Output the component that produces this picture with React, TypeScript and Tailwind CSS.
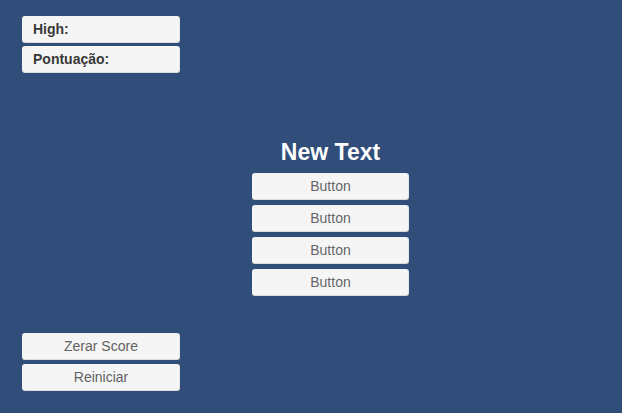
const labels = ['High:', 'Pontuação:']
const menu = ['Button', 'Button', 'Button', 'Button']
const actions = ['Zerar Score', 'Reiniciar']

const box =
  'h-[27px] rounded-[3px] bg-[#f5f5f5] shadow-[inset_0_-1px_0_rgba(0,0,0,0.10),inset_-1px_0_0_rgba(0,0,0,0.06)] flex items-center text-[14px]'

export default function App() {
  return (
    <div
      className="w-[622px] h-[413px] bg-[#314d79] flex pl-[22px] overflow-hidden"
      style={{ fontFamily: '"Liberation Sans", Arial, sans-serif' }}
    >
      {/* left column: labels top, actions bottom */}
      <div className="w-[158px] flex flex-col justify-between pt-[16px] pb-[22px]">
        <div className="flex flex-col gap-[3px]">
          {labels.map((l) => (
            <div key={l} className={`${box} pl-[11px] font-bold text-[#383838]`}>
              {l}
            </div>
          ))}
        </div>
        <div className="flex flex-col gap-[4px]">
          {actions.map((a) => (
            <button key={a} className={`${box} justify-center text-[#626262]`}>
              {a}
            </button>
          ))}
        </div>
      </div>

      {/* center menu */}
      <div className="ml-[72px] w-[157px] flex flex-col pt-[140px]">
        <h1 className="text-white font-bold text-[23px] leading-[25px] text-center">New Text</h1>
        <div className="mt-[8px] flex flex-col gap-[5px]">
          {menu.map((b, i) => (
            <button key={i} className={`${box} justify-center text-[#666666]`}>
              {b}
            </button>
          ))}
        </div>
      </div>
    </div>
  )
}
